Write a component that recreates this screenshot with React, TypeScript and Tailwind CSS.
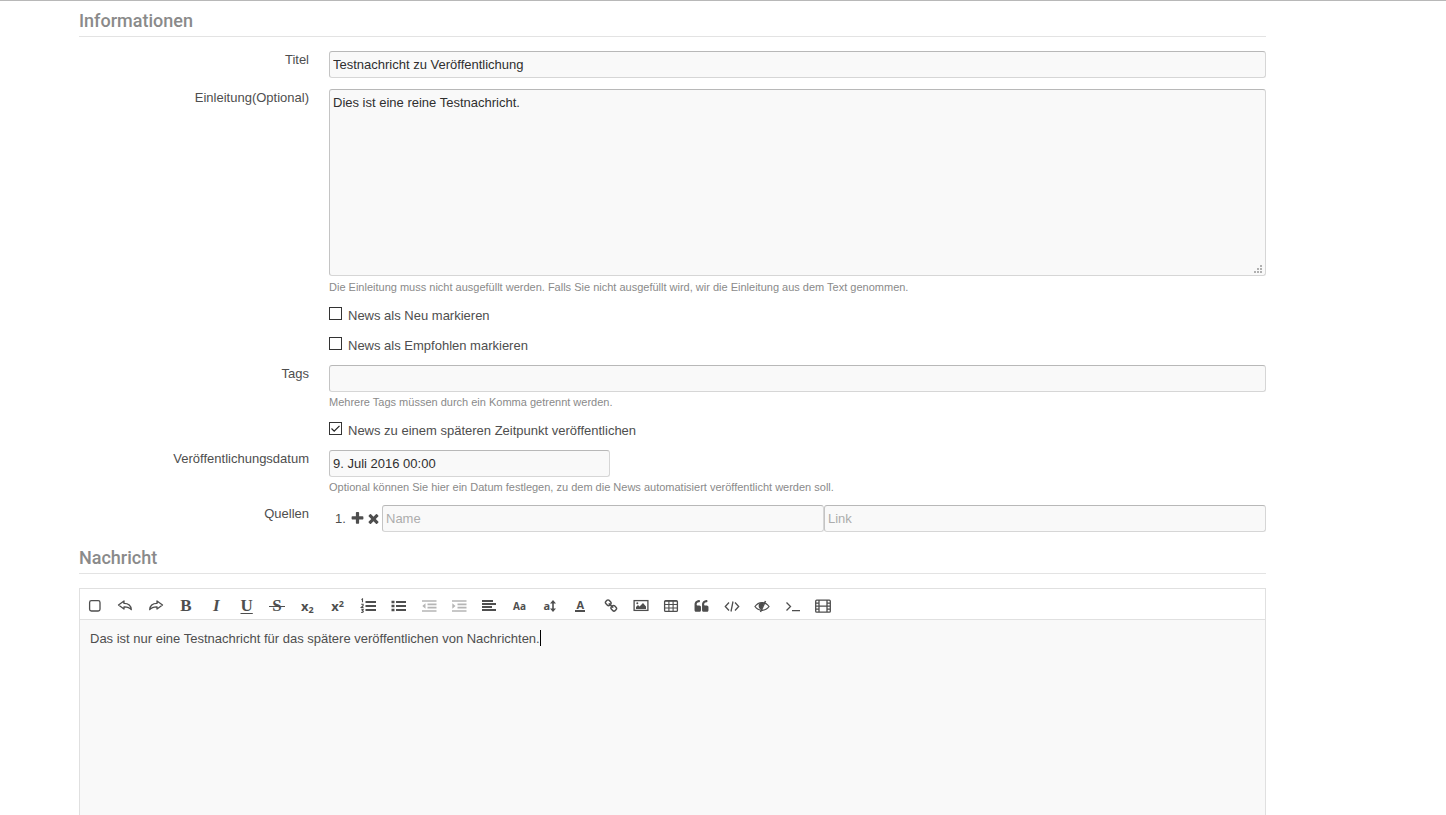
import { useState } from 'react'
import type { ReactNode } from 'react'
import clsx from 'clsx'

const inputClass =
  'block h-[27px] w-full min-w-0 rounded-[3px] border border-[#d6d6d6] border-t-[#b8b8b8] border-l-[#c4c4c4] bg-[#f9f9f9] px-[3px] text-[13px] text-[#2f2f2f] placeholder:text-[#acacac] focus:outline-none'

function Section({ title, children, className }: { title: string; children: ReactNode; className?: string }) {
  return (
    <section className={className}>
      <h2 className="border-b border-[#e3e3e3] pt-2 pb-[3px] font-['Roboto',sans-serif] text-[18px] leading-6 font-medium text-[#8a8a8a]">
        {title}
      </h2>
      {children}
    </section>
  )
}

interface FieldProps {
  label?: string
  htmlFor?: string
  hint?: string
  className?: string
  children: ReactNode
}

function Field({ label, htmlFor, hint, className, children }: FieldProps) {
  return (
    <div className={clsx('grid grid-cols-[230px_1fr] gap-x-5', className)}>
      <div className="text-right leading-[17px]">
        {label && <label htmlFor={htmlFor}>{label}</label>}
      </div>
      <div className="min-w-0">
        {children}
        {hint && <small className="mt-[3px] block text-[11px] leading-[15px] text-[#8a8a8a]">{hint}</small>}
      </div>
    </div>
  )
}

function Checkbox({ label, defaultChecked = false }: { label: string; defaultChecked?: boolean }) {
  const [checked, setChecked] = useState(defaultChecked)

  return (
    <label className="flex items-start gap-[6px] pt-[2px] leading-[18px]">
      <span className="relative block size-[13px]">
        <input
          type="checkbox"
          checked={checked}
          onChange={(e) => setChecked(e.target.checked)}
          className="block size-[13px] appearance-none border border-[#333] bg-white"
        />
        {checked && (
          <svg viewBox="0 0 13 13" className="pointer-events-none absolute inset-0 size-[13px]" fill="none" stroke="#222" strokeWidth="1.2">
            <path d="M2.5 6.5l2.7 2.7 5.3-5.4" />
          </svg>
        )}
      </span>
      {label}
    </label>
  )
}

function Fa({ d, className }: { d: string; className?: string }) {
  return (
    <svg viewBox="0 0 1792 1792" fill="currentColor" className={className ?? 'size-[14px]'}>
      <path d={d} />
    </svg>
  )
}

function Line({ children }: { children: ReactNode }) {
  return (
    <svg viewBox="0 0 16 16" fill="none" stroke="currentColor" strokeWidth="1.3" className="size-4">
      {children}
    </svg>
  )
}

const plusPath =
  'M1600 736v192q0 40-28 68t-68 28h-416v416q0 40-28 68t-68 28h-192q-40 0-68-28t-28-68v-416h-416q-40 0-68-28t-28-68v-192q0-40 28-68t68-28h416v-416q0-40 28-68t68-28h192q40 0 68 28t28 68v416h416q40 0 68 28t28 68z'
const timesPath =
  'M1490 1322q0 40-28 68l-136 136q-28 28-68 28t-68-28l-294-294-294 294q-28 28-68 28t-68-28l-136-136q-28-28-28-68t28-68l294-294-294-294q-28-28-28-68t28-68l136-136q28-28 68-28t68 28l294 294 294-294q28-28 68-28t68 28l136 136q28 28 28 68t-28 68l-294 294 294 294q28 28 28 68z'
const linkPath =
  'M1520 1216q0-40-28-68l-208-208q-28-28-68-28-42 0-72 32 3 3 19 18.5t21.5 21.5 15 19 13 25.5 3.5 27.5q0 40-28 68t-68 28q-15 0-27.5-3.5t-25.5-13-19-15-21.5-21.5-18.5-19q-33 31-33 73 0 40 28 68l206 207q27 27 68 27 40 0 68-26l147-146q28-28 28-67zm-703-705q0-40-28-68l-206-207q-28-28-68-28-39 0-68 27l-147 146q-28 28-28 67 0 40 28 68l208 208q27 27 68 27 42 0 72-31-3-3-19-18.5t-21.5-21.5-15-19-13-25.5-3.5-27.5q0-40 28-68t68-28q15 0 27.5 3.5t25.5 13 19 15 21.5 21.5 18.5 19q33-31 33-73zm895 705q0 120-85 203l-147 146q-83 83-203 83-121 0-204-85l-206-207q-83-83-83-203 0-123 88-209l-88-88q-86 88-208 88-120 0-204-84l-208-208q-84-84-84-204t85-203l147-146q83-83 203-83 121 0 204 85l206 207q83 83 83 203 0 123-88 209l88 88q86-88 208-88 120 0 204 84l208 208q84 84 84 204z'
const quotePath =
  'M832 960v384q0 80-56 136t-136 56h-384q-80 0-136-56t-56-136v-704q0-104 40.5-198.5t109.5-163.5 163.5-109.5 198.5-40.5h64q26 0 45 19t19 45v128q0 26-19 45t-45 19h-64q-106 0-181 75t-75 181v32q0 40 28 68t68 28h224q80 0 136 56t56 136zm896 0v384q0 80-56 136t-136 56h-384q-80 0-136-56t-56-136v-704q0-104 40.5-198.5t109.5-163.5 163.5-109.5 198.5-40.5h64q26 0 45 19t19 45v128q0 26-19 45t-45 19h-64q-106 0-181 75t-75 181v32q0 40 28 68t68 28h224q80 0 136 56t56 136z'

const serif = "font-['Liberation_Serif',serif] text-[17px] leading-4 font-bold"

const tools: { name: string; icon: ReactNode; disabled?: boolean }[] = [
  { name: 'Quelltext', icon: <Line><rect x="2.600" y="2.600" width="10.400" height="10.400" rx="1.800" /></Line> },
  { name: 'Rückgängig', icon: <Line><path d="M1.500 7L7 3v2.400c4.500 0 7 2 7.300 6.300C12.500 9.400 10.500 8.700 7 8.800V11z" strokeLinejoin="round" /></Line> },
  { name: 'Wiederholen', icon: <Line><path d="M14.500 7L9 3v2.400c-4.500 0-7 2-7.300 6.300C3.500 9.400 5.500 8.700 9 8.800V11z" strokeLinejoin="round" /></Line> },
  { name: 'Fett', icon: <span className={serif}>B</span> },
  { name: 'Kursiv', icon: <span className={clsx(serif, 'italic')}>I</span> },
  { name: 'Unterstrichen', icon: <span className={clsx(serif, 'underline underline-offset-2')}>U</span> },
  {
    name: 'Durchgestrichen',
    icon: (
      <span className={clsx(serif, 'relative')}>
        S
        <span className="absolute inset-x-[-3px] top-2 h-px bg-[#4e4e4e]" />
      </span>
    ),
  },
  { name: 'Tiefgestellt', icon: <span className="font-['Open_Sans',sans-serif] text-[13px] leading-4 font-bold">x<sub className="text-[9px]">2</sub></span> },
  { name: 'Hochgestellt', icon: <span className="font-['Open_Sans',sans-serif] text-[13px] leading-4 font-bold">x<sup className="text-[9px]">2</sup></span> },
  {
    name: 'Nummerierte Liste',
    icon: (
      <Line>
        <path d="M5.500 4H16M5.500 8H16M5.500 12H16" strokeWidth="2" />
        <path d="M1.500 1.800l1-.8v3.200M1.200 6.300h1.900v1.400L1.300 9.500h2.200M1.200 11.300h2l-.9 1.300c1.700.2 1.200 2.200-1.100 1.800" strokeWidth="1.100" />
      </Line>
    ),
  },
  {
    name: 'Liste',
    icon: (
      <Line>
        <path d="M6 4h10M6 8h10M6 12h10" strokeWidth="2" />
        <path d="M1.500 4h3M1.500 8h3M1.500 12h3" strokeWidth="2.600" />
      </Line>
    ),
  },
  {
    name: 'Ausrücken',
    disabled: true,
    icon: (
      <Line>
        <path d="M1 3h14.500M6.500 6.300h9M6.500 9.700h9M1 13h14.500" strokeWidth="1.700" />
        <path d="M4.500 5.300v5.400L1.300 8z" fill="currentColor" stroke="none" />
      </Line>
    ),
  },
  {
    name: 'Einrücken',
    disabled: true,
    icon: (
      <Line>
        <path d="M1 3h14.500M6.500 6.300h9M6.500 9.700h9M1 13h14.500" strokeWidth="1.700" />
        <path d="M1.300 5.300v5.400L4.500 8z" fill="currentColor" stroke="none" />
      </Line>
    ),
  },
  { name: 'Ausrichtung', icon: <Line><path d="M1 3h11M1 6h14M1 9h10M1 12h14" strokeWidth="2" /></Line> },
  { name: 'Schriftart', icon: <span className="font-['Open_Sans',sans-serif] text-[10px] leading-[14px] font-bold">Aa</span> },
  {
    name: 'Schriftgröße',
    icon: (
      <span className="flex items-center font-['Open_Sans',sans-serif] text-[11px] leading-[14px] font-bold">
        a
        <svg viewBox="0 0 6 12" className="h-3 w-[6px]" fill="currentColor">
          <path d="M3 0l3 3.500H3.800v5H6L3 12 0 8.500h2.200v-5H0z" />
        </svg>
      </span>
    ),
  },
  { name: 'Textfarbe', icon: <span className="border-b-2 border-[#4e4e4e] px-px font-['Open_Sans',sans-serif] text-[11px] leading-[10px] font-bold">A</span> },
  { name: 'Link', icon: <Fa d={linkPath} /> },
  {
    name: 'Bild',
    icon: (
      <Line>
        <rect x="1.100" y="2.600" width="13.800" height="9.800" />
        <path d="M3 11V9l2-2 1.500 1.500L10 5l3 3.500V11z" fill="currentColor" stroke="none" />
        <circle cx="4.300" cy="5.200" r="1" fill="currentColor" stroke="none" />
      </Line>
    ),
  },
  {
    name: 'Tabelle',
    icon: (
      <Line>
        <rect x="1.600" y="2.600" width="12.800" height="10.800" rx="1" />
        <path d="M2 3.200h12M2 6.500h12M2 10h12M5.900 3v10M10.100 3v10" strokeWidth="1.100" />
      </Line>
    ),
  },
  { name: 'Zitat', icon: <Fa d={quotePath} className="size-[15px]" /> },
  { name: 'Code', icon: <Line><path d="M5 4.500L1.300 8.500 5 12.500M11 4.500l3.700 4-3.700 4M9 3.500l-2 10" strokeWidth="1.300" /></Line> },
  {
    name: 'Spoiler',
    icon: (
      <Line>
        <path d="M1 8.500C4.500 3.200 11.500 3.200 15 8.500 11.500 13.500 4.500 13.500 1 8.500z" />
        <path d="M5 6c1-1.700 4-2 5.200-1L7.500 11.500C5 11 4 8.500 5 6z" fill="currentColor" stroke="none" />
        <path d="M11.500 3L6.500 14" strokeWidth="1.500" />
      </Line>
    ),
  },
  { name: 'Inline-Code', icon: <Line><path d="M1.500 4.500l4 4-4 4M7 12.700h8" strokeWidth="1.300" /></Line> },
  {
    name: 'Medien',
    icon: (
      <Line>
        <rect x=".700" y="2.200" width="14.600" height="12" rx="1" />
        <path d="M4 2v12M12 2v12M4 8.200h8M1 5.200h3M1 8.200h3M1 11.200h3M12 5.200h3M12 8.200h3M12 11.200h3" />
      </Line>
    ),
  },
]

function Editor() {
  return (
    <div className="mt-[14px] flex flex-1 flex-col border border-b-0 border-[#e0e0e0]">
      <div role="toolbar" aria-label="Formatierung" className="border-b border-[#e0e0e0] bg-white">
        <div className="flex w-[758px] max-w-full justify-between">
          {tools.map((tool) => (
            <button
              key={tool.name}
              type="button"
              aria-label={tool.name}
              disabled={tool.disabled}
              className="flex h-[30px] w-[30px] items-center justify-center pt-1 disabled:text-[#b5b5b5]"
            >
              {tool.icon}
            </button>
          ))}
        </div>
      </div>
      <div
        role="textbox"
        aria-multiline="true"
        aria-label="Nachricht"
        contentEditable
        suppressContentEditableWarning
        className="flex-1 bg-[#f9f9f9] p-[10px] leading-[17px] focus:outline-none"
      >
        <p className="flex">
          Das ist nur eine Testnachricht für das spätere veröffentlichen von Nachrichten.
          <span className="h-4 w-px bg-black" />
        </p>
      </div>
    </div>
  )
}

export default function App() {
  return (
    <form
      className="flex min-h-screen flex-col border-t border-[#b8b8b8] bg-white pr-[180px] pl-[79px] font-['Liberation_Sans',Arial,sans-serif] text-[13px] text-[#4e4e4e]"
      onSubmit={(e) => e.preventDefault()}
    >
      <Section title="Informationen">
        <div className="mt-[14px] flex flex-col gap-[10px]">
          <Field label="Titel" htmlFor="title">
            <input id="title" type="text" defaultValue="Testnachricht zu Veröffentlichung" className={inputClass} />
          </Field>

          <Field
            label="Einleitung(Optional)"
            htmlFor="teaser"
            className="pt-px"
            hint="Die Einleitung muss nicht ausgefüllt werden. Falls Sie nicht ausgefüllt wird, wir die Einleitung aus dem Text genommen."
          >
            <div className="relative pb-px">
              <textarea
                id="teaser"
                defaultValue="Dies ist eine reine Testnachricht."
                className="block h-[187px] w-full resize-none rounded-[3px] border border-[#d6d6d6] border-t-[#b8b8b8] border-l-[#c4c4c4] bg-[#f9f9f9] px-[3px] py-1 leading-[17px] text-[#2f2f2f] focus:outline-none"
              />
              <svg viewBox="0 0 8 8" className="pointer-events-none absolute right-1 bottom-1 size-2" fill="#b0b0b0">
                <path d="M6 0h2v2H6zM3 3h2v2H3zM6 3h2v2H6zM0 6h2v2H0zM3 6h2v2H3zM6 6h2v2H6z" />
              </svg>
            </div>
          </Field>

          <Field>
            <Checkbox label="News als Neu markieren" />
          </Field>

          <Field>
            <Checkbox label="News als Empfohlen markieren" />
          </Field>

          <Field label="Tags" htmlFor="tags" hint="Mehrere Tags müssen durch ein Komma getrennt werden.">
            <input id="tags" type="text" className={inputClass} />
          </Field>

          <Field>
            <Checkbox label="News zu einem späteren Zeitpunkt veröffentlichen" defaultChecked />
          </Field>

          <Field
            label="Veröffentlichungsdatum"
            htmlFor="date"
            hint="Optional können Sie hier ein Datum festlegen, zu dem die News automatisiert veröffentlicht werden soll."
          >
            <div className="max-w-[281px]">
              <input id="date" type="text" defaultValue="9. Juli 2016 00:00" className={inputClass} />
            </div>
          </Field>

          <Field label="Quellen" htmlFor="source-name">
            <ol>
              <li className="flex items-center pl-[6px]">
                <span className="w-[15px] shrink-0">1.</span>
                <button type="button" aria-label="Quelle hinzufügen" className="shrink-0">
                  <Fa d={plusPath} className="size-[15px]" />
                </button>
                <button type="button" aria-label="Quelle entfernen" className="mr-px ml-px shrink-0">
                  <Fa d={timesPath} className="size-[15px]" />
                </button>
                <input id="source-name" type="text" placeholder="Name" aria-label="Name" className={inputClass} />
                <input type="text" placeholder="Link" aria-label="Link" className={inputClass} />
              </li>
            </ol>
          </Field>
        </div>
      </Section>

      <Section title="Nachricht" className="mt-[6px] flex flex-1 flex-col">
        <Editor />
      </Section>
    </form>
  )
}
